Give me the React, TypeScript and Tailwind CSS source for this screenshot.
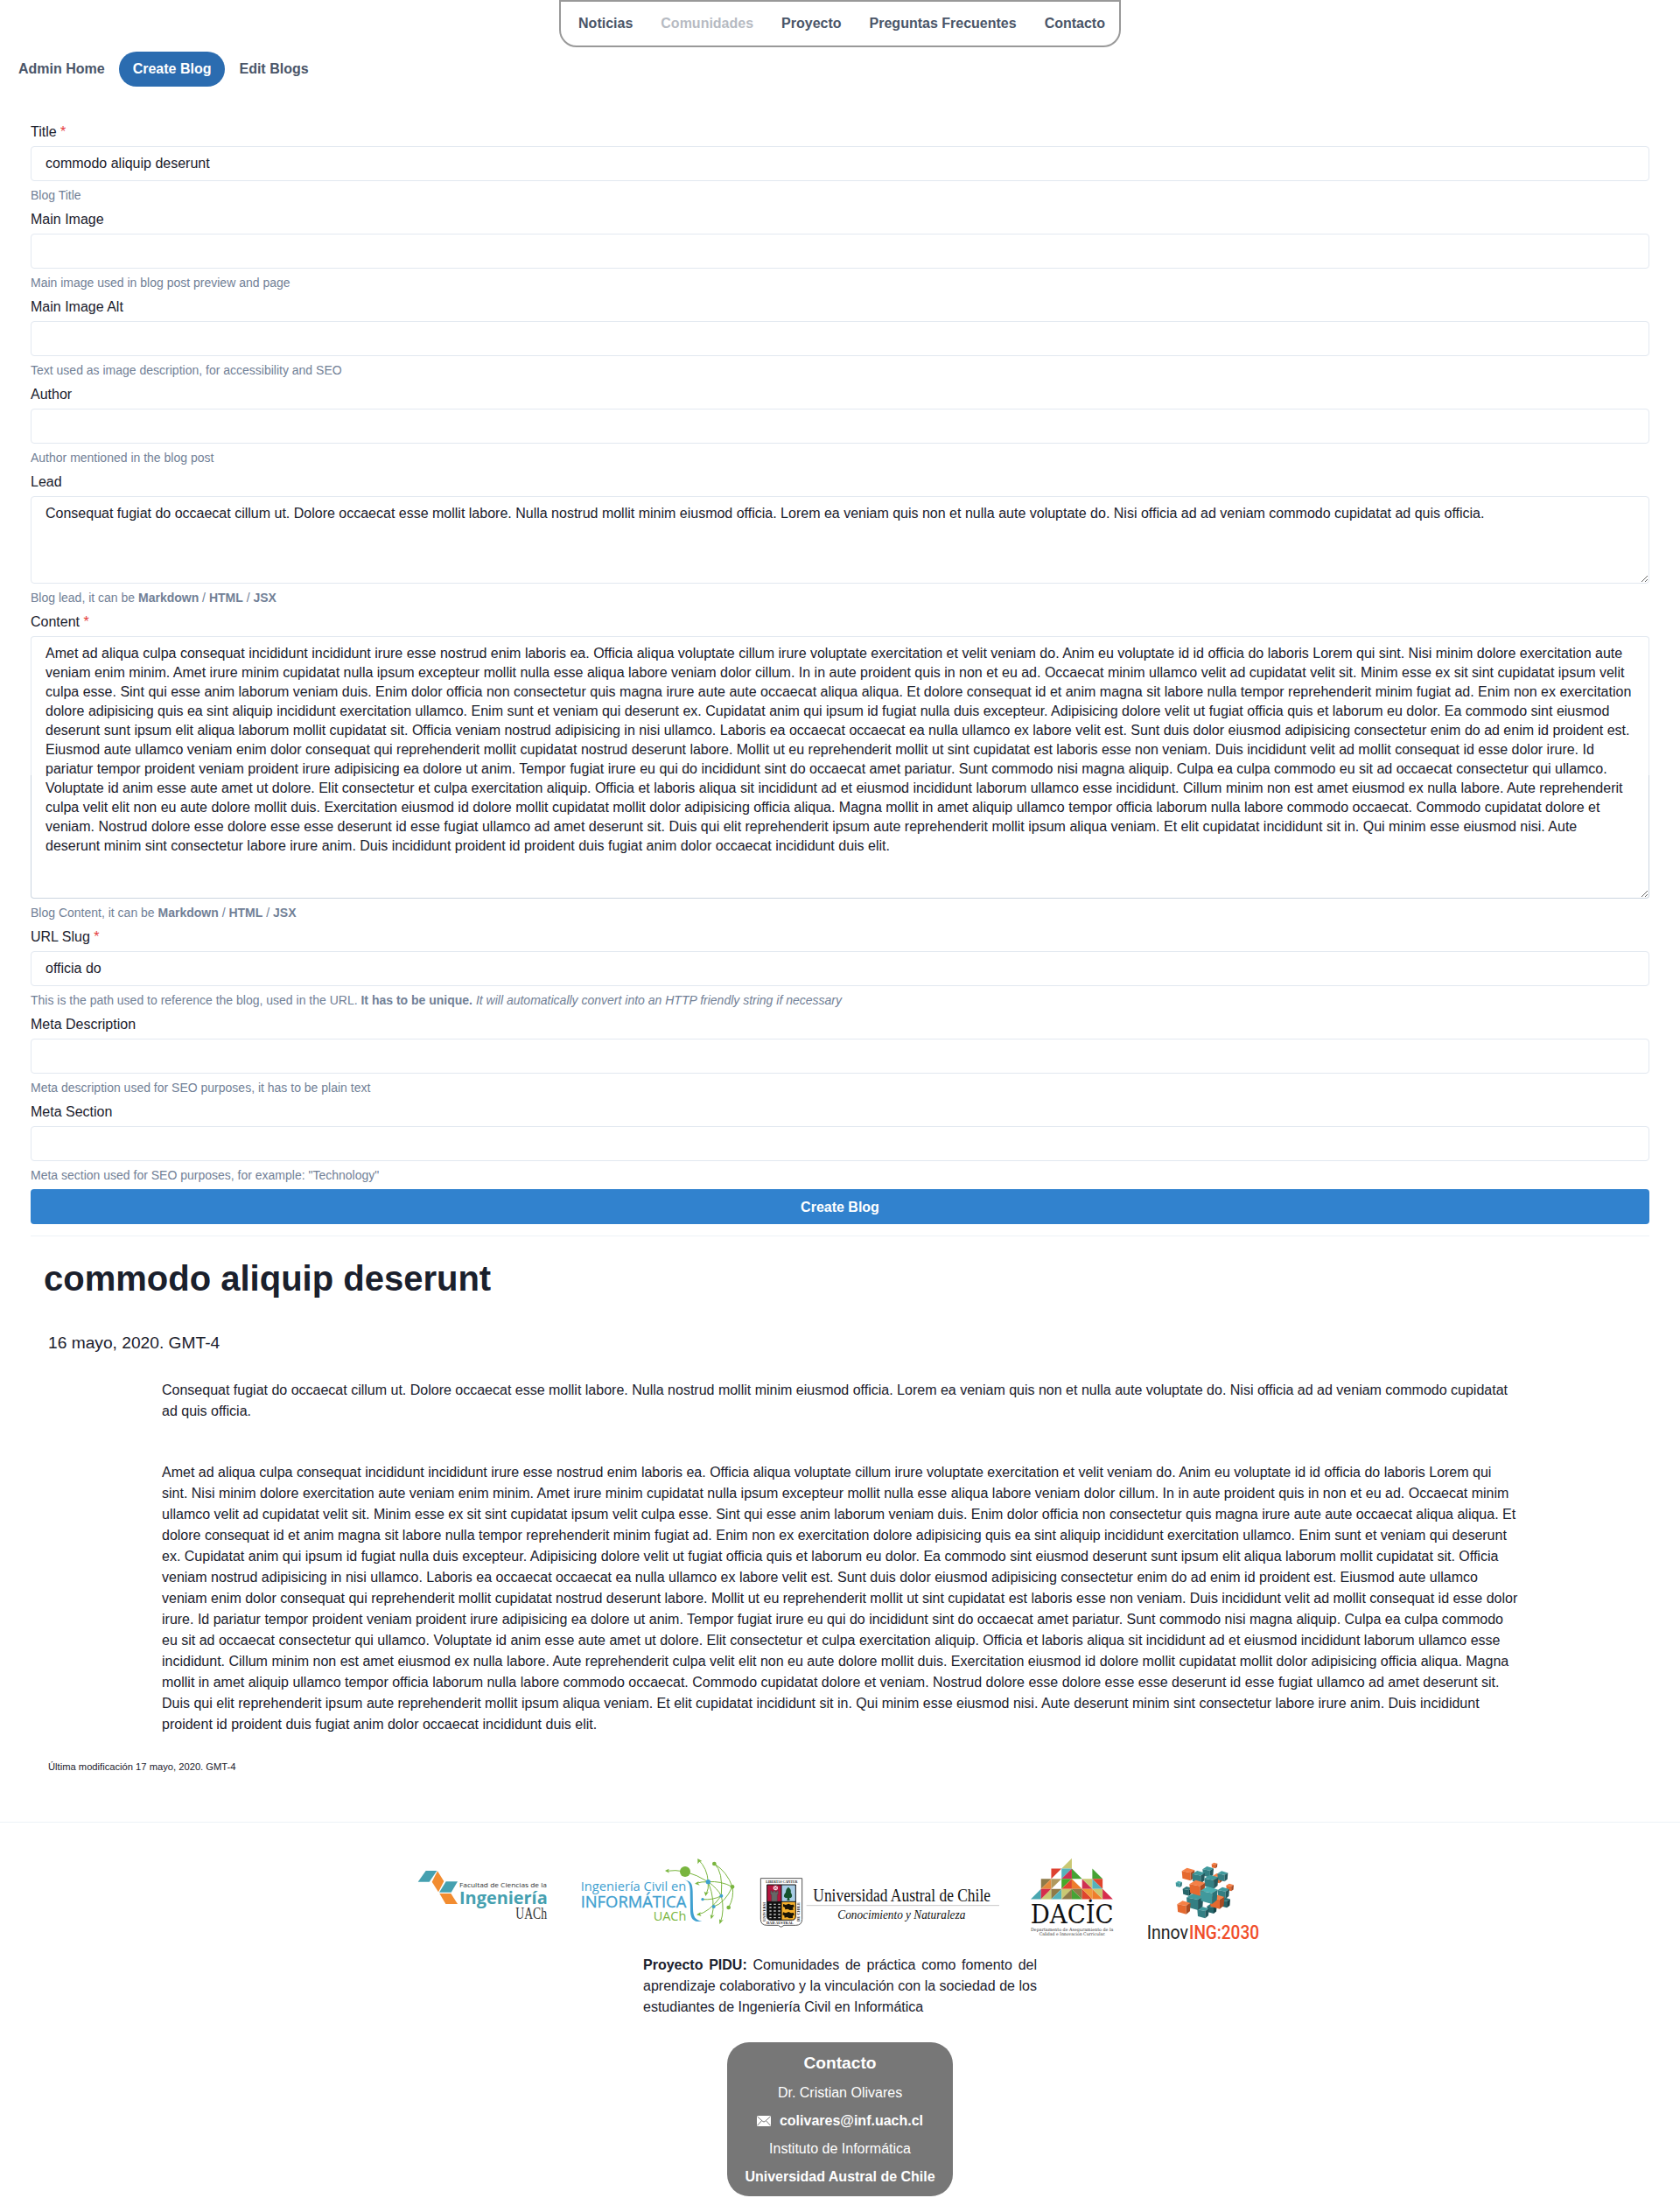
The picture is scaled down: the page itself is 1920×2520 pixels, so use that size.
import React from "react";

const LEAD =
  "Consequat fugiat do occaecat cillum ut. Dolore occaecat esse mollit labore. Nulla nostrud mollit minim eiusmod officia. Lorem ea veniam quis non et nulla aute voluptate do. Nisi officia ad ad veniam commodo cupidatat ad quis officia.";

const CONTENT =
  "Amet ad aliqua culpa consequat incididunt incididunt irure esse nostrud enim laboris ea. Officia aliqua voluptate cillum irure voluptate exercitation et velit veniam do. Anim eu voluptate id id officia do laboris Lorem qui sint. Nisi minim dolore exercitation aute veniam enim minim. Amet irure minim cupidatat nulla ipsum excepteur mollit nulla esse aliqua labore veniam dolor cillum. In in aute proident quis in non et eu ad. Occaecat minim ullamco velit ad cupidatat velit sit. Minim esse ex sit sint cupidatat ipsum velit culpa esse. Sint qui esse anim laborum veniam duis. Enim dolor officia non consectetur quis magna irure aute aute occaecat aliqua aliqua. Et dolore consequat id et anim magna sit labore nulla tempor reprehenderit minim fugiat ad. Enim non ex exercitation dolore adipisicing quis ea sint aliquip incididunt exercitation ullamco. Enim sunt et veniam qui deserunt ex. Cupidatat anim qui ipsum id fugiat nulla duis excepteur. Adipisicing dolore velit ut fugiat officia quis et laborum eu dolor. Ea commodo sint eiusmod deserunt sunt ipsum elit aliqua laborum mollit cupidatat sit. Officia veniam nostrud adipisicing in nisi ullamco. Laboris ea occaecat occaecat ea nulla ullamco ex labore velit est. Sunt duis dolor eiusmod adipisicing consectetur enim do ad enim id proident est. Eiusmod aute ullamco veniam enim dolor consequat qui reprehenderit mollit cupidatat nostrud deserunt labore. Mollit ut eu reprehenderit mollit ut sint cupidatat est laboris esse non veniam. Duis incididunt velit ad mollit consequat id esse dolor irure. Id pariatur tempor proident veniam proident irure adipisicing ea dolore ut anim. Tempor fugiat irure eu qui do incididunt sint do occaecat amet pariatur. Sunt commodo nisi magna aliquip. Culpa ea culpa commodo eu sit ad occaecat consectetur qui ullamco. Voluptate id anim esse aute amet ut dolore. Elit consectetur et culpa exercitation aliquip. Officia et laboris aliqua sit incididunt ad et eiusmod incididunt laborum ullamco esse incididunt. Cillum minim non est amet eiusmod ex nulla labore. Aute reprehenderit culpa velit elit non eu aute dolore mollit duis. Exercitation eiusmod id dolore mollit cupidatat mollit dolor adipisicing officia aliqua. Magna mollit in amet aliquip ullamco tempor officia laborum nulla labore commodo occaecat. Commodo cupidatat dolore et veniam. Nostrud dolore esse dolore esse esse deserunt id esse fugiat ullamco ad amet deserunt sit. Duis qui elit reprehenderit ipsum aute reprehenderit mollit ipsum aliqua veniam. Et elit cupidatat incididunt sit in. Qui minim esse eiusmod nisi. Aute deserunt minim sint consectetur labore irure anim. Duis incididunt proident id proident duis fugiat anim dolor occaecat incididunt duis elit.";

function Field({
  label,
  required,
  help,
  children,
}: {
  label: string;
  required?: boolean;
  help: React.ReactNode;
  children: React.ReactNode;
}) {
  return (
    <div className="flex flex-col">
      <label className="pb-1 leading-6">
        {label}
        {required && <span className="text-[#e53e3e]"> *</span>}
      </label>
      {children}
      <div className="mt-2 mb-2 text-sm leading-4 text-[#718096]">{help}</div>
    </div>
  );
}

function TextInput({ value = "" }: { value?: string }) {
  return (
    <input
      defaultValue={value}
      className="block h-10 w-full rounded border border-[#e2e8f0] bg-white px-4 outline-none"
    />
  );
}

function Markup({ prefix }: { prefix: string }) {
  return (
    <>
      {prefix} <b>Markdown</b> / <b>HTML</b> / <b>JSX</b>
    </>
  );
}

function FacultadLogo() {
  return (
    <svg className="overflow-visible" width="160" height="130" viewBox="30 0 480 390">
      <polygon points="80,114 118,114 92,152 53,152" fill="#45a0b0" />
      <polygon points="120,115 142,150 123,187 101,152" fill="#f28c30" />
      <polygon points="149,151 189,151 167,188 126,188" fill="#45a0b0" />
      <polygon points="127,192 166,192 189,228 148,228" fill="#f28c30" />
      <text x="195" y="171" fontSize="23" fontFamily="'Open Sans'" fill="#333" textLength="300" lengthAdjust="spacingAndGlyphs">
        Facultad de Ciencias de la
      </text>
      <text x="195" y="228" fontSize="58" fontWeight="700" fontFamily="'Open Sans'" fill="#45a0b0" textLength="302" lengthAdjust="spacingAndGlyphs">
        Ingeniería
      </text>
      <text x="388" y="279" fontSize="56" fontFamily="'Liberation Serif'" fill="#333" textLength="107" lengthAdjust="spacingAndGlyphs">
        UACh
      </text>
    </svg>
  );
}

function InformaticaLogo() {
  return (
    <svg className="overflow-visible" width="180" height="130" viewBox="600 0 540 390">
      <g fontFamily="'Open Sans'">
        <text x="611" y="182" fontSize="43" fill="#3fa0d0" textLength="362" lengthAdjust="spacingAndGlyphs">
          Ingeniería Civil en
        </text>
        <text x="611" y="240" fontSize="56" fill="#3fa0d0" stroke="#3fa0d0" strokeWidth="1" textLength="362" lengthAdjust="spacingAndGlyphs">
          INFORMÁTICA
        </text>
        <text x="860" y="285" fontSize="46" fill="#79b53e" textLength="113" lengthAdjust="spacingAndGlyphs">
          UACh
        </text>
      </g>
      <path d="M965 145 C990 150 994 158 995 185 L996 245 C997 272 1004 283 1027 287 C1003 292 988 283 987 255 L986 180 C985 160 982 150 965 145Z" fill="#3fa0d0" />
      <g fill="none" stroke="#79b53e" strokeWidth="3">
        <path d="M969 117 Q935 110 905 115" />
        <path d="M969 117 Q1010 128 1048 152" />
        <path d="M1048 152 Q1045 105 1014 76" />
        <path d="M1048 152 Q1025 151 1007 157" />
        <path d="M1048 152 Q1051 175 1041 195" />
        <path d="M1048 152 Q1080 175 1093 200" />
        <path d="M1048 152 Q1090 148 1131 169" />
        <path d="M1069 90 Q1100 115 1093 200" />
        <path d="M1069 90 Q1113 118 1131 169 Q1138 205 1118 240" />
        <path d="M1131 169 Q1105 225 1067 237" />
        <path d="M1093 200 Q1065 215 1029 212" />
        <path d="M1093 200 Q1105 250 1090 291" />
        <path d="M1093 200 Q1050 258 1012 264" />
        <path d="M1048 152 Q1075 220 1060 275" />
      </g>
      <g fill="#79b53e">
        <circle cx="969" cy="117" r="18" />
        <circle cx="1069" cy="90" r="7" />
        <circle cx="1131" cy="169" r="7" />
        <circle cx="1118" cy="240" r="7" />
        <polygon points="900,114 914,107 911,115 915,122" />
        <polygon points="1012,72 1027,81 1018,83 1012,91" />
        <polygon points="1002,158 1016,150 1013,157 1019,164" />
        <polygon points="1039,201 1034,185 1042,190 1050,186" />
        <polygon points="1087,297 1086,280 1093,285 1101,281" />
        <polygon points="1008,265 1022,256 1020,263 1025,270" />
        <polygon points="1058,280 1055,264 1062,269 1070,265" />
      </g>
      <g fill="#3fa0d0">
        <circle cx="1048" cy="152" r="8" />
        <circle cx="1093" cy="200" r="6" />
        <circle cx="1067" cy="237" r="6" />
        <circle cx="1029" cy="212" r="5" />
      </g>
    </svg>
  );
}

function AustralLogo() {
  return (
    <svg className="overflow-visible" width="280" height="130" viewBox="75 0 840 390">
      <path d="M88 140 H230 V280 Q230 301 208 301 H168 L158 307 L148 301 H110 Q88 301 88 280Z" fill="#fff" stroke="#555" strokeWidth="3" />
      <rect x="110" y="162" width="49" height="58" fill="#b5153f" />
      <rect x="159" y="162" width="49" height="58" fill="#a9cde6" />
      <path d="M110 220 H159 V283 H122 Q110 283 110 270Z" fill="#111" />
      <path d="M159 220 H208 V270 Q208 283 196 283 H159Z" fill="#f6b02c" />
      <path d="M110 162 H208 V270 Q208 283 196 283 H122 Q110 283 110 270Z M159 162 V283 M110 220 H208" fill="none" stroke="#111" strokeWidth="3" />
      <circle cx="139" cy="173" r="8" fill="#f3dbe2" />
      <path d="M133 167 L145 179 M145 167 L133 179" stroke="#b5153f" strokeWidth="2" />
      <path d="M122 182 h5 v5 h5 v-5 h6 v5 h5 v-5 h5 v14 h-3 v23 h-20 v-23 h-3Z" fill="#666" stroke="#333" />
      <path d="M183 170 Q194 178 191 188 Q200 202 191 207 L186 208 L188 216 H178 L180 208 Q165 207 168 198 Q170 192 174 188 Q174 176 183 170Z" fill="#14522b" />
      <g stroke="#ccc" strokeWidth="4" strokeDasharray="7 8">
        <path d="M118 229 H156 M118 240 H156 M118 252 H156 M118 264 H156 M118 275 H156" />
      </g>
      <g fill="#1a1405">
        <path d="M165 228 l9 3 10-4 8 4 9-1 2 8-5 2 2 8-12 1-7-4-9 2-1-7-6-3Z" />
        <path d="M165 256 l9 3 10-4 8 4 9-1 2 8-5 2 0 8-12 1-7-4-9 2-1-7-6-3Z" />
      </g>
      <g fontFamily="'Liberation Serif'" fontWeight="700" fill="#222">
        <text x="106" y="157" fontSize="13" textLength="108" lengthAdjust="spacingAndGlyphs">LIBERTAS CAPITUR</text>
        <text x="108" y="297" fontSize="13" textLength="92" lengthAdjust="spacingAndGlyphs">DAD AUSTRAL</text>
        <text transform="translate(104 288) rotate(-90)" fontSize="12" textLength="66" lengthAdjust="spacingAndGlyphs">UNIVERSI</text>
        <text transform="translate(221 288) rotate(-90)" fontSize="12" textLength="66" lengthAdjust="spacingAndGlyphs">DE CHILE</text>
      </g>
      <text x="268" y="218" fontSize="64" fontFamily="'Liberation Serif'" fill="#111" textLength="608" lengthAdjust="spacingAndGlyphs">
        Universidad Austral de Chile
      </text>
      <path d="M245 233 H906" stroke="#aaa" strokeWidth="2" />
      <text x="352" y="278" fontSize="45" fontStyle="italic" fontFamily="'Liberation Serif'" fill="#111" textLength="438" lengthAdjust="spacingAndGlyphs">
        Conocimiento y Naturaleza
      </text>
    </svg>
  );
}

type Tri = [number, number, "ul" | "lr" | "ll" | "ur", string];

const TRIANGLES: Tri[] = [
  [3, 0, "lr", "#c9c873"],
  [2, 1, "ul", "#dd4030"],
  [3, 1, "ul", "#55b3bb"],
  [3, 1, "lr", "#cf3052"],
  [4, 1, "ll", "#46a335"],
  [6, 1, "ll", "#46a335"],
  [1, 2, "ul", "#8f7a48"],
  [1, 2, "lr", "#e58a3c"],
  [2, 2, "ul", "#b0995f"],
  [3, 2, "ul", "#46a928"],
  [3, 2, "lr", "#e0452e"],
  [4, 2, "ll", "#ee7d2c"],
  [5, 2, "ll", "#cf3052"],
  [5, 2, "ur", "#c9c873"],
  [6, 2, "ll", "#55b3bb"],
  [6, 2, "ur", "#e0452e"],
  [0, 3, "lr", "#4aa7b0"],
  [1, 3, "ul", "#d62d4c"],
  [1, 3, "lr", "#c9c873"],
  [2, 3, "ul", "#8f7a48"],
  [2, 3, "lr", "#55b3bb"],
  [3, 3, "ul", "#c9c873"],
  [3, 3, "lr", "#8f7a48"],
  [4, 3, "ll", "#46a335"],
  [4, 3, "ur", "#8f7a48"],
  [5, 3, "ll", "#e0452e"],
  [5, 3, "ur", "#f19a3a"],
  [6, 3, "ll", "#ee7d2c"],
  [6, 3, "ur", "#c9c873"],
  [7, 3, "ll", "#d62d4c"],
];

function triPoints([col, row, kind]: Tri) {
  const s = 35.2;
  const l = 84 + col * s;
  const t = 71 + row * s;
  const r = l + s;
  const b = t + s;
  const corners = {
    ul: [l, t, r, t, l, b],
    lr: [r, t, r, b, l, b],
    ll: [l, t, r, b, l, b],
    ur: [l, t, r, t, r, b],
  };
  return corners[kind].join(" ");
}

function DacicLogo() {
  return (
    <svg className="overflow-visible" width="100" height="130" viewBox="75 0 300 390">
      {TRIANGLES.map((tri, i) => (
        <polygon key={i} points={triPoints(tri)} fill={tri[3]} />
      ))}
      <text x="83" y="294" fontSize="87" fontFamily="'DejaVu Serif'" fill="#111" textLength="285" lengthAdjust="spacingAndGlyphs">
        DACİC
      </text>
      <g fontFamily="'DejaVu Serif'" fill="#333">
        <text x="84" y="320" fontSize="15" textLength="283" lengthAdjust="spacingAndGlyphs">
          Departamento de Aseguramiento de la
        </text>
        <text x="113" y="336" fontSize="15" textLength="227" lengthAdjust="spacingAndGlyphs">
          Calidad e Innovación Curricular.
        </text>
      </g>
    </svg>
  );
}

const TEAL = ["#3f9a9d", "#347f83", "#24595e"];
const DARK = ["#2c7478", "#26666a", "#174347"];
const LIGHT = ["#4bb0b2", "#41999c", "#2a7377"];
const ORANGE = ["#f58046", "#e5692f", "#a84a22"];

const CUBES: [number, number, number, string[]][] = [
  [170, 80, 17, ORANGE],
  [66, 124, 16, DARK],
  [150, 184, 17, DARK],
  [195, 163, 18, DARK],
  [120, 197, 20, TEAL],
  [137, 58, 19, TEAL],
  [187, 73, 18, TEAL],
  [69, 66, 22, ORANGE],
  [104, 76, 22, TEAL],
  [159, 36, 10, ORANGE],
  [37, 100, 11, LIGHT],
  [148, 92, 24, TEAL],
  [212, 111, 13, ORANGE],
  [190, 130, 20, TEAL],
  [92, 160, 29, TEAL],
  [100, 113, 27, ORANGE],
  [168, 160, 25, ORANGE],
  [140, 138, 30, LIGHT],
  [54, 180, 23, ORANGE],
];

function InnovingLogo() {
  return (
    <svg className="overflow-visible" width="130" height="130" viewBox="480 0 390 390">
      <g transform="translate(555 60)">
        {CUBES.map(([x, y, r, c], i) => (
          <g key={i} transform={`translate(${x} ${y}) scale(${r})`}>
            <polygon points="-1,-.5 -.2,-1 1,-.65 .35,-.25" fill={c[0]} />
            <polygon points="-1,-.5 .35,-.25 .35,1 -.9,.65" fill={c[1]} />
            <polygon points=".35,-.25 1,-.65 .9,.55 .35,1" fill={c[2]} />
          </g>
        ))}
      </g>
      <text x="482" y="349" fontSize="66" fontFamily="Roboto" fill="#222" textLength="142" lengthAdjust="spacingAndGlyphs">
        Innov
      </text>
      <text x="627" y="349" fontSize="68" fontWeight="500" fontFamily="Roboto" fill="#f04e2a" textLength="240" lengthAdjust="spacingAndGlyphs">
        ING:2030
      </text>
    </svg>
  );
}

function MailIcon() {
  return (
    <svg width="16" height="12" viewBox="0 0 16 12">
      <rect width="16" height="12" rx="1" fill="#fff" />
      <path d="M.5 .8 L6.6 6.4 Q8 7.6 9.4 6.4 L15.5 .8 M.5 11.2 L5.6 5.6 M15.5 11.2 L10.4 5.6" fill="none" stroke="#777" strokeWidth="1" />
    </svg>
  );
}

export default function App() {
  const nav = ["Noticias", "Comunidades", "Proyecto", "Preguntas Frecuentes", "Contacto"];
  return (
    <div className="min-h-[2520px] bg-white font-['Liberation_Sans',Arial,sans-serif] text-base text-[#1a202c]">
      <header className="flex justify-center">
        <nav className="flex h-[54px] rounded-b-[20px] border-2 border-[#999] pt-[5px] pl-1 font-bold text-[#4a5568]">
          {nav.map((item) => (
            <a
              key={item}
              className={
                item === "Comunidades"
                  ? "flex h-10 items-center px-4 opacity-40"
                  : "flex h-10 items-center px-4"
              }
            >
              {item}
            </a>
          ))}
        </nav>
      </header>

      <nav className="mt-[5px] flex pl-[5px] font-bold text-[#4a5568]">
        <a className="flex h-10 items-center px-4">Admin Home</a>
        <a className="flex h-10 items-center rounded-[20px] bg-[#2b6cb0] px-4 text-white">Create Blog</a>
        <a className="flex h-10 items-center px-4">Edit Blogs</a>
      </nav>

      <main className="px-[35px] pt-10">
        <form className="flex flex-col">
          <Field label="Title" required help="Blog Title">
            <TextInput value="commodo aliquip deserunt" />
          </Field>
          <Field label="Main Image" help="Main image used in blog post preview and page">
            <TextInput />
          </Field>
          <Field label="Main Image Alt" help="Text used as image description, for accessibility and SEO">
            <TextInput />
          </Field>
          <Field label="Author" help="Author mentioned in the blog post">
            <TextInput />
          </Field>
          <Field label="Lead" help={<Markup prefix="Blog lead, it can be" />}>
            <textarea
              defaultValue={LEAD}
              className="block h-[100px] w-full rounded border border-[#e2e8f0] px-4 py-2 leading-[22px] outline-none"
            />
          </Field>
          <Field label="Content" required help={<Markup prefix="Blog Content, it can be" />}>
            <textarea
              defaultValue={CONTENT}
              className="block h-[300px] w-full rounded border border-transparent px-4 py-2 leading-[22px] outline-none [background:linear-gradient(#fff,#fff)_padding-box,linear-gradient(#e2e8f0_53%,#cbd5e0_53%)_border-box]"
            />
          </Field>
          <Field
            label="URL Slug"
            required
            help={
              <>
                This is the path used to reference the blog, used in the URL. <b>It has to be unique.</b>{" "}
                <i>It will automatically convert into an HTTP friendly string if necessary</i>
              </>
            }
          >
            <TextInput value="officia do" />
          </Field>
          <Field label="Meta Description" help="Meta description used for SEO purposes, it has to be plain text">
            <TextInput />
          </Field>
          <Field label="Meta Section" help={'Meta section used for SEO purposes, for example: "Technology"'}>
            <TextInput />
          </Field>
          <button type="button" className="h-10 rounded bg-[#3182ce] pt-0.5 font-bold text-white">
            Create Blog
          </button>
        </form>

        <hr className="mt-[13px] border-[#edf2f7]" />

        <article>
          <h1 className="mt-[18px] ml-[15px] text-[40px] leading-[60px] font-bold">commodo aliquip deserunt</h1>
          <p className="mt-[30px] ml-5 text-[19.2px] leading-7">16 mayo, 2020. GMT-4</p>
          <p className="mx-[150px] mt-[28px] leading-6">{LEAD}</p>
          <p className="mx-[150px] mt-[46px] leading-6">{CONTENT}</p>
          <p className="mt-7 ml-5 text-[11.2px] leading-4">Última modificación 17 mayo, 2020. GMT-4</p>
        </article>
      </main>

      <footer className="mt-[55px] border-t border-[#edf2f7]">
        <div className="mt-[17px] flex items-start justify-center pr-[10px]">
          <FacultadLogo />
          <div className="w-[30px]" />
          <InformaticaLogo />
          <div className="w-[25px]" />
          <AustralLogo />
          <div className="w-[30px]" />
          <DacicLogo />
          <div className="w-[35px]" />
          <InnovingLogo />
        </div>
        <p className="mx-auto mt-1 w-[450px] text-justify leading-6">
          <b>Proyecto PIDU:</b> Comunidades de práctica como fomento del aprendizaje colaborativo y la vinculación con
          la sociedad de los estudiantes de Ingeniería Civil en Informática
        </p>
        <div className="mx-auto mt-7 flex h-[176px] w-[258px] flex-col items-center gap-2 rounded-[25px] bg-[#777] pt-[10px] leading-6 whitespace-nowrap text-white">
          <h2 className="text-[19.2px] leading-7 font-bold">Contacto</h2>
          <span>Dr. Cristian Olivares</span>
          <span className="flex items-center gap-[10px] font-bold">
            <MailIcon />
            colivares@inf.uach.cl
          </span>
          <span>Instituto de Informática</span>
          <b>Universidad Austral de Chile</b>
        </div>
      </footer>
    </div>
  );
}
